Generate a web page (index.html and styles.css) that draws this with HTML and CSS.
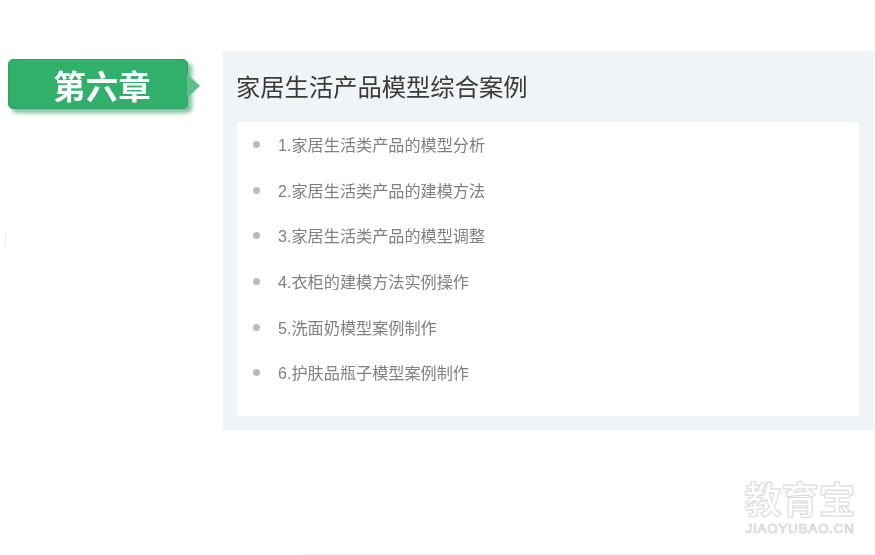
FILE: index.html
```html
<!DOCTYPE html>
<html lang="zh">
<head>
<meta charset="utf-8">
<title>第六章</title>
<link rel="stylesheet" href="styles.css">
</head>
<body>
<main class="page">
  <div class="badge">
    <span class="badge-text">第六章</span>
    <span class="badge-arrow"></span>
  </div>
  <section class="panel">
    <h2 class="panel-title">家居生活产品模型综合案例</h2>
    <ul class="lessons">
      <li class="lesson">1.家居生活类产品的模型分析</li>
      <li class="lesson">2.家居生活类产品的建模方法</li>
      <li class="lesson">3.家居生活类产品的模型调整</li>
      <li class="lesson">4.衣柜的建模方法实例操作</li>
      <li class="lesson">5.洗面奶模型案例制作</li>
      <li class="lesson">6.护肤品瓶子模型案例制作</li>
    </ul>
  </section>
</main>
<div class="watermark">
  <div class="wm-cn">教育宝</div>
  <div class="wm-en">JIAOYUBAO.CN</div>
</div>
<div class="edge-mark"></div>
<div class="bottom-line"></div>
</body>
</html>
```
FILE: styles.css
```css
html, body {
  margin: 0;
  padding: 0;
  background: #fff;
}
body {
  width: 875px;
  height: 555px;
  overflow: hidden;
  position: relative;
  font-family: "Liberation Sans", "Noto Sans CJK SC", sans-serif;
}
.page {
  display: flex;
  align-items: flex-start;
  padding: 51px 1px 0 8px;
}
.badge {
  position: relative;
  flex: none;
  width: 180px;
  height: 50px;
  margin-top: 8px;
  margin-right: 35px;
  background: #31b06c;
  border: 1px solid #2aa562;
  box-sizing: border-box;
  border-radius: 5px;
  box-shadow: 4px 4px 4px rgba(40, 150, 90, .6);
  display: flex;
  align-items: center;
  justify-content: center;
}
.badge-text {
  color: #fff;
  font-size: 32.5px;
  font-weight: 700;
  line-height: 48px;
  margin: 8px 0 0 8px;
  filter: blur(.3px);
}
.badge-arrow {
  position: absolute;
  left: 178px;
  top: 14px;
  width: 0;
  height: 0;
  border-style: solid;
  border-width: 12px 0 12px 13px;
  border-color: transparent transparent transparent #5cbf8a;
}
.panel {
  flex: 1;
  height: 379px;
  box-sizing: border-box;
  background: #f0f4f7;
  padding: 0 15px 14px 14px;
  display: flex;
  flex-direction: column;
  box-shadow: 0 1px 1px #f6f8fa;
}
.panel-title {
  margin: 0 0 0 -1px;
  height: 71px;
  line-height: 74px;
  font-size: 24.3px;
  font-weight: 400;
  color: #3a3a3a;
  filter: blur(.3px);
}
.lessons {
  flex: 1;
  margin: 0;
  padding: 1px 0 0 41px;
  list-style: none;
  background: #fff;
}
.lesson {
  position: relative;
  height: 45.7px;
  line-height: 45.7px;
  font-size: 16.15px;
  color: #808080;
  filter: blur(.3px);
}
.lesson::before {
  content: "";
  position: absolute;
  left: -25px;
  top: 18px;
  width: 7px;
  height: 7px;
  border-radius: 50%;
  background: #bbb;
}
.watermark {
  position: absolute;
  left: 744px;
  top: 482px;
  width: 112px;
  text-align: center;
  color: #fff;
  -webkit-text-stroke: 1px #d9d9d9;
}
.wm-cn {
  font-size: 37px;
  line-height: 40px;
  font-weight: 700;
}
.wm-en {
  font-size: 13.5px;
  line-height: 14px;
  letter-spacing: .7px;
  -webkit-text-stroke: .6px #c8c8c8;
}
.edge-mark {
  position: absolute;
  left: 5px;
  top: 231px;
  width: 1px;
  height: 16px;
  background: #e8ecf4;
}
.bottom-line {
  position: absolute;
  left: 300px;
  right: 0;
  top: 554px;
  height: 1px;
  background: #f0f2f4;
}
```
